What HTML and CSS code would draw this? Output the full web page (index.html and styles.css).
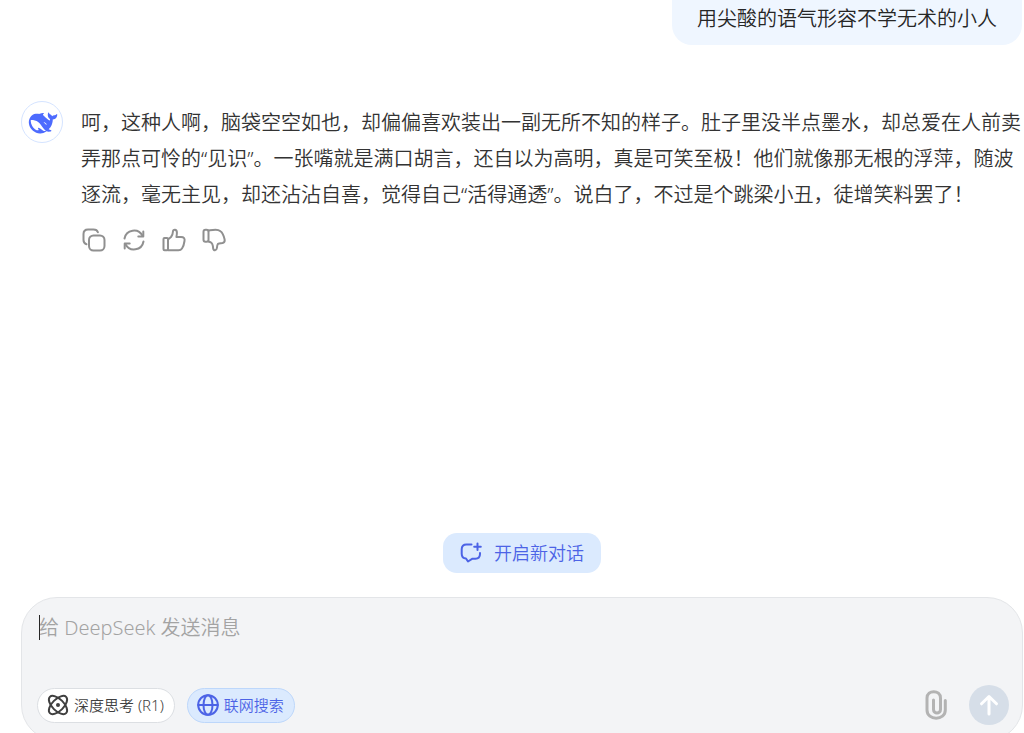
FILE: index.html
```
<!DOCTYPE html>
<html lang="zh-CN">
<head>
    <meta charset="UTF-8">
    <meta name="viewport" content="width=device-width, initial-scale=1.0">
    <title>DeepSeek</title>
    <link rel="stylesheet" href="styles.css">
</head>
<body>
    <main class="chat">
        <div class="user-message">用尖酸的语气形容不学无术的小人</div>

        <div class="answer">
            <div class="avatar">
                <svg width="36" height="36" viewBox="0 0 30 30" fill="#4d6bfe"><path d="M27.501 8.469C27.249 8.346 27.141 8.58 26.993 8.699C26.943 8.738 26.9 8.789 26.858 8.834C26.49 9.229 26.061 9.486 25.5 9.455C24.679 9.41 23.979 9.668 23.359 10.297C23.228 9.521 22.79 9.059 22.125 8.762C21.776 8.607 21.424 8.453 21.181 8.117C21.01 7.879 20.964 7.613 20.878 7.352C20.824 7.193 20.77 7.031 20.588 7.004C20.391 6.973 20.314 7.139 20.236 7.277C19.926 7.844 19.807 8.469 19.817 9.102C19.845 10.523 20.445 11.656 21.637 12.463C21.773 12.555 21.808 12.648 21.765 12.783C21.684 13.061 21.587 13.33 21.501 13.607C21.447 13.785 21.366 13.824 21.177 13.746C20.523 13.473 19.957 13.068 19.458 12.578C18.61 11.758 17.844 10.852 16.888 10.143C16.663 9.977 16.44 9.822 16.207 9.676C15.231 8.727 16.335 7.947 16.59 7.855C16.857 7.76 16.683 7.428 15.819 7.432C14.957 7.436 14.167 7.725 13.161 8.109C13.014 8.168 12.859 8.211 12.7 8.244C11.787 8.072 10.839 8.033 9.848 8.145C7.982 8.354 6.492 9.236 5.396 10.744C4.081 12.555 3.771 14.613 4.15 16.762C4.549 19.023 5.702 20.898 7.476 22.363C9.313 23.881 11.431 24.625 13.846 24.482C15.313 24.398 16.946 24.201 18.788 22.641C19.253 22.871 19.74 22.963 20.55 23.033C21.173 23.092 21.773 23.002 22.237 22.906C22.965 22.752 22.914 22.078 22.651 21.953C20.519 20.959 20.986 21.363 20.561 21.037C21.645 19.752 23.278 18.418 23.917 14.098C23.967 13.754 23.924 13.539 23.917 13.26C23.913 13.092 23.951 13.025 24.145 13.006C24.679 12.945 25.197 12.799 25.674 12.535C27.056 11.779 27.612 10.539 27.744 9.051C27.764 8.824 27.74 8.588 27.501 8.469ZM15.46 21.861C13.393 20.234 12.391 19.699 11.977 19.723C11.59 19.744 11.659 20.188 11.744 20.477C11.833 20.762 11.949 20.959 12.112 21.209C12.225 21.375 12.302 21.623 12 21.807C11.334 22.221 10.177 21.668 10.122 21.641C8.775 20.848 7.649 19.799 6.855 18.365C6.09 16.984 5.645 15.504 5.571 13.924C5.552 13.541 5.664 13.406 6.043 13.338C6.542 13.246 7.058 13.227 7.557 13.299C9.666 13.607 11.462 14.553 12.967 16.047C13.826 16.9 14.477 17.918 15.147 18.912C15.858 19.969 16.625 20.975 17.601 21.799C17.944 22.088 18.22 22.309 18.482 22.471C17.69 22.559 16.365 22.578 15.46 21.861Z"/><path fill="#fff" d="M16.5 15.3C16.9 14.9 17.9 15.6 18.6 16.5C19.1 17.2 18.8 17.5 18.2 17.1C17.8 16.8 17.7 16.3 17.2 16.1C16.7 15.9 16.3 15.7 16.5 15.3Z"/></svg>
            </div>
            <div class="answer-body">
                <p>呵，这种人啊，脑袋空空如也，却偏偏喜欢装出一副无所不知的样子。肚子里没半点墨水，却总爱在人前卖弄那点可怜的“见识”。一张嘴就是满口胡言，还自以为高明，真是可笑至极！他们就像那无根的浮萍，随波逐流，毫无主见，却还沾沾自喜，觉得自己“活得通透”。说白了，不过是个跳梁小丑，徒增笑料罢了！</p>
                <div class="actions">
                    <button type="button" aria-label="复制">
                        <svg width="24" height="24" viewBox="0 0 24 24"><rect x="7" y="7.500" width="15.500" height="15" rx="4.500"/><path d="M4.500 16.200C2.500 15.600 1.500 14.200 1.500 12V6C1.500 3 3 1.500 6 1.500H11.500C13.800 1.500 15.300 2.400 15.900 4.300"/></svg>
                    </button>
                    <button type="button" aria-label="重新生成">
                        <svg width="24" height="24" viewBox="0 0 24 24"><path d="M2.500 10.500A9.600 9.600 0 0 1 20.500 7.800M21.500 13.500A9.600 9.600 0 0 1 3.500 16.200"/><path d="M21.300 3.500V8.500H16.300M2.700 20.500V15.500H7.700"/></svg>
                    </button>
                    <button type="button" aria-label="喜欢">
                        <svg width="24" height="24" viewBox="0 0 24 24"><path d="M6 11.500L9 9C10.300 7.500 10.900 5.500 11 3.300C11.100 1.300 14.700 1.100 14.900 4.400C15 6.300 14.700 7.600 14.400 9H19C22 9 23 10.500 22.500 13C22 16.500 21.500 18.500 20 20.500C19 22 18 22.300 16.500 22.300H6"/><rect x="1.500" y="10" width="4.500" height="12.300" rx="1"/></svg>
                    </button>
                    <button type="button" aria-label="不喜欢">
                        <svg width="24" height="24" viewBox="0 0 24 24"><path d="M6.500 13.500L8.500 14.200C10.800 15.200 11 17.500 11.200 20.700C11.400 22.900 14.600 22.800 14.900 20C15 18 15.200 17 16 15.800C17.500 15 19 15.300 20.500 15C22.500 14.500 23 13 22.500 11C21.700 7.500 20.500 4.700 18.500 3.200C17 2 15.500 1.700 13.500 1.700C10.500 1.700 8.500 2.200 6.500 2.500"/><rect x="1.500" y="1.800" width="5" height="12" rx="2"/></svg>
                    </button>
                </div>
            </div>
        </div>
    </main>

    <footer class="bottom">
        <button type="button" class="new-chat">
            <svg width="22" height="22" viewBox="0 0 22 22"><path d="M11.500 2.500H6.500C3.300 2.500 1.700 4.100 1.700 7.200V11.800C1.700 14.800 3 16.400 6 16.500L8 19.500L12.500 16.700H15.500C18.500 16.700 20 15 20 12V11"/><path d="M17.500 1.500V8M14.200 4.700H20.800"/></svg>
            开启新对话
        </button>

        <form class="composer">
            <div class="input-wrap">
                <textarea rows="2" aria-label="消息" placeholder="给 DeepSeek 发送消息"></textarea>
                <span class="caret"></span>
            </div>
            <div class="toolbar">
                <button type="button" class="pill">
                    <svg width="22" height="22" viewBox="0 0 22 22"><ellipse cx="11" cy="11" rx="11.500" ry="5.800" transform="rotate(45 11 11)"/><ellipse cx="11" cy="11" rx="11.500" ry="5.800" transform="rotate(-45 11 11)"/><circle class="dot" cx="11" cy="11" r="2"/></svg>
                    深度思考 (R1)
                </button>
                <button type="button" class="pill active">
                    <svg width="22" height="22" viewBox="0 0 22 22"><circle cx="11" cy="11" r="9.800"/><ellipse cx="11" cy="11" rx="4.500" ry="9.800"/><path d="M1.200 11H20.800"/></svg>
                    联网搜索
                </button>
                <button type="button" class="attach" aria-label="上传附件">
                    <svg width="22" height="30" viewBox="0 0 22 30"><path d="M15.500 8V19.500C15.500 24 8.500 24 8.500 19.500V10M15.500 19V8C15.500 -0.500 2 -0.500 2 8V20C2 31 20.300 31 20.300 20V10.500"/></svg>
                </button>
                <button type="submit" class="send" aria-label="发送">
                    <svg width="20" height="22" viewBox="0 0 20 22"><path d="M10 20V2.500M2.500 9.800L10 2.500L17.500 9.800"/></svg>
                </button>
            </div>
        </form>
    </footer>
</body>
</html>
```
FILE: styles.css
```
* {
    box-sizing: border-box;
}
html, body {
    height: 100%;
    overflow: hidden;
}
body {
    margin: 0;
    display: flex;
    flex-direction: column;
    background: #fff;
    color: #333;
    font-family: "Noto Sans", "Noto Sans CJK SC", sans-serif;
    font-weight: 350;
}
button, textarea {
    font: inherit;
    color: inherit;
    border: none;
    background: none;
    padding: 0;
}
svg {
    display: block;
    flex: none;
}
button svg {
    fill: none;
    stroke: currentColor;
    stroke-width: 2;
    stroke-linecap: round;
    stroke-linejoin: round;
}

/* conversation */
.chat {
    flex: 1;
    min-height: 0;
    display: flex;
    flex-direction: column;
    padding: 0 2px 0 21px;
}
.user-message {
    align-self: flex-end;
    padding: 5px 25px 12px;
    border-radius: 0 0 20px 20px;
    background: #eff6ff;
    color: #262626;
    font-size: 20px;
    line-height: 28px;
}
.answer {
    display: flex;
    gap: 18px;
    margin-top: 56px;
}
.avatar {
    display: flex;
    align-items: center;
    justify-content: center;
    flex: none;
    width: 42px;
    height: 42px;
    border: 1px solid #d5e4ff;
    border-radius: 50%;
}
.answer-body {
    flex: 1;
    padding-top: 4px;
}
.answer-body p {
    margin: 0;
    font-size: 20px;
    line-height: 36px;
}
.actions {
    display: flex;
    gap: 16px;
    margin-top: 15px;
    padding-left: 1px;
    color: #909090;
}

/* bottom area */
.bottom {
    display: flex;
    flex-direction: column;
    align-items: center;
    gap: 24px;
    margin-bottom: -8px;
    padding: 0 1px 0 21px;
}
.new-chat {
    display: flex;
    align-items: center;
    gap: 12px;
    height: 40px;
    padding: 0 17px;
    border-radius: 14px;
    background: #dbeafe;
    color: #4c63e6;
    font-size: 18px;
    line-height: 24px;
}
.composer {
    width: 100%;
    padding: 14px 13px 15px 15px;
    border: 1px solid #e3e5e8;
    border-radius: 36px;
    background: #f3f4f6;
}
.input-wrap {
    position: relative;
}
textarea {
    display: block;
    width: 100%;
    height: 73px;
    padding: 0 2px;
    resize: none;
    outline: none;
    font-size: 20px;
    line-height: 32px;
}
textarea::placeholder {
    color: #a3a3a3;
}
.caret {
    position: absolute;
    left: 2px;
    top: 3px;
    width: 1px;
    height: 25px;
    background: #262626;
}
.toolbar {
    display: flex;
    align-items: center;
    gap: 12px;
}
.pill {
    display: flex;
    align-items: center;
    gap: 5px;
    height: 35px;
    padding: 0 10px 0 9px;
    border: 1px solid #dcdfe3;
    border-radius: 18px;
    background: #fff;
    color: #404040;
    font-size: 15px;
    line-height: 20px;
}
.pill .dot {
    fill: currentColor;
    stroke: none;
}
.pill.active {
    border-color: #bdd7fb;
    background: #dbeafe;
    color: #4c63e6;
}
.attach {
    margin-left: auto;
    margin-right: 10px;
    color: #b3b3b3;
}
.attach svg {
    stroke-width: 3;
}
.send {
    display: flex;
    align-items: center;
    justify-content: center;
    width: 40px;
    height: 40px;
    border-radius: 50%;
    background: #d6dee8;
    color: #fff;
}
.send svg {
    stroke-width: 3;
}
```
